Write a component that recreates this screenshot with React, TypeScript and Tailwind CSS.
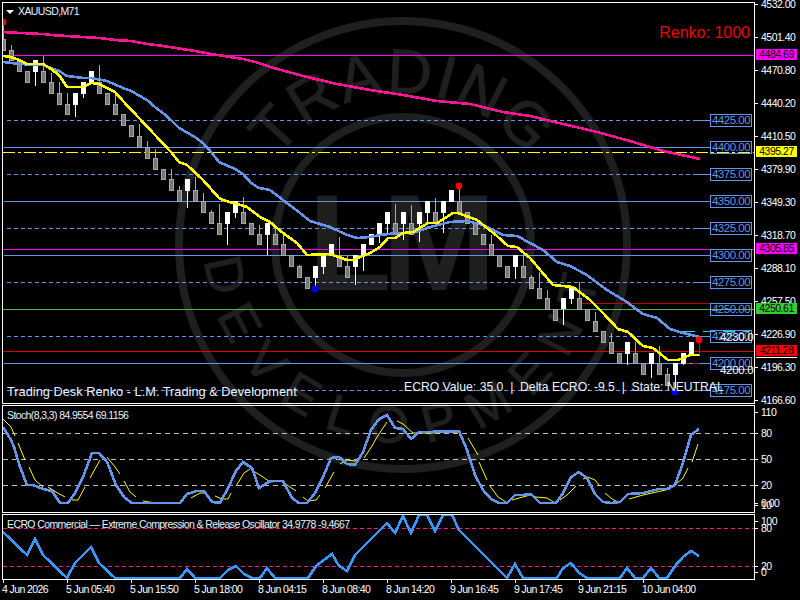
import React from "react";

// [center x, body top, body bottom, wick top, wick bottom, bull]
type Brick = [number, number, number, number, number, number];

const bricks: Brick[] = [
  [3, 39, 51, 25, 51, 0], [11, 50, 61, 45, 61, 0], [19, 61, 72, 61, 72, 0], [27, 71, 83, 71, 83, 0],
  [35, 60, 72, 60, 86, 1], [43, 71, 83, 56, 83, 0], [51, 82, 94, 73, 94, 0], [59, 93, 105, 82, 105, 0],
  [67, 104, 115, 93, 115, 0], [75, 93, 105, 93, 117, 1], [83, 82, 94, 82, 98, 1], [91, 71, 83, 71, 83, 1],
  [99, 82, 94, 65, 94, 0], [107, 93, 105, 93, 105, 0], [115, 104, 115, 95, 115, 0], [123, 114, 126, 114, 126, 0],
  [131, 125, 137, 125, 137, 0], [139, 136, 148, 124, 148, 0], [147, 147, 159, 141, 159, 0], [155, 158, 170, 149, 170, 0],
  [163, 169, 180, 169, 180, 0], [171, 179, 191, 169, 191, 0], [179, 190, 202, 186, 202, 0], [187, 179, 191, 179, 208, 1],
  [195, 190, 202, 177, 202, 0], [203, 201, 213, 193, 213, 0], [211, 212, 224, 210, 224, 0], [219, 223, 235, 204, 235, 0],
  [227, 212, 224, 212, 245, 1], [235, 201, 213, 201, 218, 1], [243, 212, 224, 197, 224, 0], [251, 223, 235, 223, 235, 0],
  [259, 234, 245, 225, 245, 0], [267, 223, 235, 223, 255, 1], [275, 234, 245, 225, 245, 0], [283, 244, 256, 232, 256, 0],
  [291, 255, 267, 255, 267, 0], [299, 266, 278, 265, 278, 0], [307, 277, 289, 277, 289, 0], [315, 266, 278, 266, 289, 1],
  [323, 255, 267, 255, 274, 1], [331, 244, 256, 244, 256, 1], [339, 255, 267, 237, 267, 0], [347, 266, 278, 255, 278, 0],
  [355, 255, 267, 255, 285, 1], [363, 244, 256, 244, 271, 1], [371, 234, 245, 234, 245, 1], [379, 223, 235, 223, 243, 1],
  [387, 212, 224, 212, 235, 1], [395, 223, 235, 204, 235, 0], [403, 212, 224, 212, 240, 1], [411, 223, 235, 205, 235, 0],
  [419, 212, 224, 212, 242, 1], [427, 201, 213, 201, 223, 1], [435, 212, 224, 198, 224, 0], [443, 201, 213, 201, 233, 1],
  [451, 190, 202, 190, 202, 1], [459, 201, 213, 186, 213, 0], [467, 212, 224, 212, 224, 0], [475, 223, 235, 223, 235, 0],
  [483, 234, 245, 234, 245, 0], [491, 244, 256, 235, 256, 0], [499, 255, 267, 255, 267, 0], [507, 266, 278, 266, 278, 0],
  [515, 255, 267, 255, 279, 1], [523, 266, 278, 253, 278, 0], [531, 277, 289, 275, 289, 0], [539, 288, 299, 272, 299, 0],
  [547, 298, 310, 290, 310, 0], [555, 309, 321, 309, 321, 0], [563, 298, 309, 298, 325, 1], [571, 288, 299, 288, 304, 1],
  [579, 298, 310, 282, 310, 0], [587, 309, 321, 309, 321, 0], [595, 321, 332, 312, 332, 0], [603, 331, 343, 331, 343, 0],
  [611, 342, 354, 333, 354, 0], [619, 353, 364, 353, 364, 0], [627, 342, 354, 342, 365, 1], [635, 353, 364, 342, 364, 0],
  [643, 363, 375, 363, 375, 0], [651, 353, 364, 353, 378, 1], [659, 363, 375, 346, 375, 0], [667, 374, 386, 368, 386, 0],
  [675, 363, 375, 363, 392, 1], [683, 353, 364, 353, 365, 1], [691, 342, 354, 342, 354, 1],
];

const pinkMa = "3,32 20,33 43,34 51,35 83,37 99,38 115,40 131,41 147,44 163,46 195,51 211,54 243,59 259,63 270,67 303,76 337,84 370,90 403,95 437,101 470,104 503,112 530,116 563,124 597,132 630,141 663,151 700,159";
const blueMa = "3,62 11,63 19,64 43,65 51,68 59,71 67,76 83,78 91,78 107,81 123,88 131,91 147,100 155,107 163,113 171,120 179,128 195,137 203,143 211,152 219,162 235,169 243,174 251,183 259,188 270,190 283,200 300,213 310,221 330,227 347,235 357,238 370,237 380,235 397,233 413,233 430,227 450,222 467,221 483,225 503,235 517,236 530,243 543,250 557,262 570,266 587,275 607,290 627,302 643,314 657,318 670,329 683,333 700,337";
const yellowMa = "3,56 11,57 19,60 27,64 43,64 51,69 59,75 67,87 83,87 91,83 99,84 115,92 123,101 139,118 155,135 171,152 179,162 187,165 203,180 219,198 223,200 247,207 260,217 270,222 283,233 297,243 307,255 330,254 347,260 353,260 370,253 380,247 388,238 395,238 403,233 413,232 428,223 437,223 453,213 458,213 477,220 497,236 508,246 517,247 530,258 553,285 573,287 590,300 603,313 618,329 628,332 643,346 653,348 668,360 678,360 690,355 700,355";

const stochMain = "3,427 11,440 14,447 20,467 27,485 33,485 43,489 52,491 60,503 68,503 75,493 83,477 92,453 99,453 107,462 116,485 124,497 132,503 180,503 187,494 197,491 204,491 212,502 220,503 228,488 236,471 243,462 252,468 259,488 267,483 270,481 283,481 292,498 299,503 307,503 315,493 323,477 331,458 339,457 347,464 355,465 363,452 371,430 379,419 387,415 395,428 403,429 411,439 419,432 427,432 459,431 467,450 475,475 483,490 491,499 499,503 507,503 515,495 523,495 531,494 540,503 556,503 563,493 571,477 579,472 587,478 595,494 603,502 612,503 620,502 628,494 643,493 659,489 667,489 675,485 683,463 691,435 699,429";
const stochSignal = [
  "3,419 11,427 15,436", "18,443 25,460", "29,467 35,480 43,487", "48,487 56,492 65,497", "72,500 78,500 85,487",
  "90,478 100,460", "107,457 115,467 120,474", "124,481 130,492 136,497", "143,501 155,503 165,503", "167,503 180,503",
  "191,498 200,493 207,493", "215,496 222,499 228,499 231,493", "236,486 244,473 250,469", "255,472 263,477 270,482 281,481 290,487 296,491",
  "303,497 308,501 316,500 320,495", "325,488 334,472", "340,464 347,460 355,461 358,460", "364,458 372,446 377,437 387,422",
  "397,421 403,424 413,433 430,433 460,432", "468,438 478,455", "479,462 487,480", "490,486 498,497 506,502",
  "512,500 530,495 536,497 547,498 555,503", "560,500 567,495 576,486", "583,479 588,477 595,480 600,486", "605,493 612,499 620,503",
  "629,499 643,495 670,489", "675,485 683,478 688,468", "692,462 698,444",
];
const ecroLine = "3,532 27,555 35,539 43,555 67,578 75,563 91,547 99,563 115,578 180,578 187,569 195,578 220,578 228,570 236,566 244,574 252,578 260,578 267,568 270,572 275,578 308,578 316,566 332,554 339,566 347,571 355,555 387,523 395,533 403,516 411,533 419,515 427,515 435,531 443,515 452,515 459,530 507,578 515,564 523,578 557,578 563,568 571,563 579,573 587,578 620,578 627,568 635,578 643,578 651,568 659,578 667,578 675,566 683,557 691,551 699,556";

const levels = [
  { y: 120, label: "4425.00", dashed: true }, { y: 147, label: "4400.00", dashed: false },
  { y: 174, label: "4375.00", dashed: true }, { y: 201, label: "4350.00", dashed: false },
  { y: 228, label: "4325.00", dashed: true }, { y: 255, label: "4300.00", dashed: false },
  { y: 282, label: "4275.00", dashed: true }, { y: 309, label: "4250.00", dashed: false },
  { y: 336, label: "4225.00", dashed: true }, { y: 363, label: "4200.00", dashed: false },
  { y: 390, label: "4175.00", dashed: true },
];

const priceTicks = [
  ["4532.00", 4], ["4501.40", 37], ["4470.80", 70], ["4440.20", 103], ["4410.50", 136], ["4379.90", 169], ["4349.30", 202],
  ["4318.70", 235], ["4288.10", 268], ["4257.50", 301], ["4226.90", 334], ["4196.30", 367], ["4166.60", 400],
] as const;

const priceTags = [
  { label: "4484.69", y: 55, cls: "bg-[#ff00ff] text-black" },
  { label: "4395.27", y: 152, cls: "bg-[#ffff00] text-black" },
  { label: "4305.85", y: 249, cls: "bg-[#ff00ff] text-black" },
  { label: "4250.61", y: 309, cls: "bg-[#32cd32] text-black" },
  { label: "4211.28", y: 351, cls: "bg-[#ff0000] text-black" },
];

const stochTicks = [["110", 412], ["80", 433], ["50", 459], ["20", 485], ["0.00", 503], ["10", 505]] as const;
const ecroTicks = [["100", 521], ["80", 528], ["20", 566], ["0", 572]] as const;
const timeLabels = ["4 Jun 2026", "5 Jun 05:40", "5 Jun 15:50", "5 Jun 18:00", "8 Jun 04:15", "8 Jun 08:40", "8 Jun 14:20", "9 Jun 16:45", "9 Jun 17:45", "9 Jun 21:15", "10 Jun 04:00"];

function Watermark() {
  return (
    <svg className="absolute inset-0" width={800} height={600} fill="none">
      <defs>
        <path id="arc-top" d="M 251 245 A 152 152 0 0 1 555 245" />
        <path id="arc-bottom" d="M 205 245 A 198 198 0 0 0 601 245" />
      </defs>
      <circle cx={403} cy={245} r={224} stroke="#1f1f1f" strokeWidth={8} />
      <circle cx={403} cy={245} r={128} stroke="#1f1f1f" strokeWidth={8} />
      <g fill="#1f1f1f" fontFamily="'Liberation Sans', sans-serif">
        <text fontSize={62} letterSpacing={2} stroke="#1f1f1f">
          <textPath href="#arc-top" startOffset="50%" textAnchor="middle">TRADING</textPath>
        </text>
        <text fontSize={52} letterSpacing={18} stroke="#1f1f1f">
          <textPath href="#arc-bottom" startOffset="50%" textAnchor="middle">DEVELOPMENT</textPath>
        </text>
        <text x={308} y={290} fontSize={137} fontWeight={700}>L</text>
        <text x={382} y={290} fontSize={137} fontWeight={700}>M</text>
      </g>
    </svg>
  );
}

function MainChart() {
  return (
    <svg className="absolute inset-0" width={751} height={400} viewBox="3 3 751 400" fill="none">
      <line x1={3} x2={754} y1={55.5} y2={55.5} stroke="#ff00ff" />
      {levels.map((l) => (
        <g key={l.y}>
          <line x1={l.dashed ? 7 : 4} x2={697} y1={l.y + 0.5} y2={l.y + 0.5} stroke="#6495ed" strokeDasharray={l.dashed ? "4 3" : undefined} />
          <line x1={697} x2={711} y1={l.y + 0.5} y2={l.y + 0.5} stroke="#6495ed" />
        </g>
      ))}
      <line x1={3} x2={754} y1={152.5} y2={152.5} stroke="#ffff00" strokeDasharray="12 3 3 3" />
      <line x1={3} x2={754} y1={249.5} y2={249.5} stroke="#ff00ff" />
      <line x1={3} x2={754} y1={309.5} y2={309.5} stroke="#4cb84c" />
      <line x1={3} x2={754} y1={351.5} y2={351.5} stroke="#e00000" />
      <line x1={579} x2={710} y1={303.5} y2={303.5} stroke="#c00000" />
      <line x1={683} x2={750} y1={331.5} y2={331.5} stroke="#00e0e0" strokeDasharray="12 8" />
      <line x1={683} x2={700} y1={363.5} y2={363.5} stroke="#e00000" strokeDasharray="6 4" />
      {bricks.map(([x, top, bottom, wTop, wBottom, bull]) => (
        <g key={x} shapeRendering="crispEdges">
          <line x1={x + 0.5} x2={x + 0.5} y1={wTop} y2={wBottom} stroke={bull ? "#ffffff" : "#a8a8a8"} />
          <rect x={x - 1.5} y={top + 0.5} width={4} height={bottom - top - 1} fill={bull ? "#ffffff" : "#787878"} stroke={bull ? "#ffffff" : "#a8a8a8"} />
        </g>
      ))}
      <polyline points={pinkMa} stroke="#ff1493" strokeWidth={2.6} shapeRendering="crispEdges" />
      <polyline points={blueMa} stroke="#6495ed" strokeWidth={2.6} shapeRendering="crispEdges" />
      <polyline points={yellowMa} stroke="#ffff00" strokeWidth={2.6} shapeRendering="crispEdges" />
      <line x1={699.5} x2={699.5} y1={340} y2={355} stroke="#ff0000" />
      <circle cx={3} cy={22} r={3.4} fill="#ff0000" />
      <circle cx={459} cy={186} r={3.4} fill="#ff0000" />
      <circle cx={699} cy={340} r={3.4} fill="#ff0000" />
      <circle cx={315} cy={289} r={3.4} fill="#0000ff" />
      <circle cx={675} cy={392} r={3.4} fill="#0000ff" />
    </svg>
  );
}

function StochChart() {
  return (
    <svg className="absolute inset-0" width={751} height={106} viewBox="3 406 751 106" fill="none">
      {[433, 459, 485].map((y) => (
        <line key={y} x1={3} x2={754} y1={y + 0.5} y2={y + 0.5} stroke="#c0c0c0" strokeDasharray="5 4" />
      ))}
      {stochSignal.map((p) => (
        <polyline key={p} points={p} stroke="#ffff00" />
      ))}
      <polyline points={stochMain} stroke="#6495ed" strokeWidth={2.6} shapeRendering="crispEdges" />
    </svg>
  );
}

function EcroChart() {
  return (
    <svg className="absolute inset-0" width={751} height={64} viewBox="3 515 751 64" fill="none">
      {[528, 566].map((y) => (
        <line key={y} x1={3} x2={754} y1={y + 0.5} y2={y + 0.5} stroke="#ff1493" strokeDasharray="4 3" />
      ))}
      <polyline points={ecroLine} stroke="#3399ff" strokeWidth={2.6} shapeRendering="crispEdges" />
    </svg>
  );
}

function AxisLabel({ text, y, top }: { text: string; y: number; top: number }) {
  return (
    <div className="absolute left-0 flex items-center" style={{ top: y - top - 6 }}>
      <div className="w-[3px] h-px bg-white" />
      <span className="ml-[3px] h-3 leading-3 text-white">{text}</span>
    </div>
  );
}

export default function App() {
  return (
    <div className="relative w-[800px] h-[600px] bg-black overflow-hidden font-['Liberation_Sans',sans-serif] text-[10.5px]">
      <Watermark />
      <div className="relative flex flex-col gap-px pt-[2px] pl-[2px]">
        {/* Price pane */}
        <div className="flex h-[402px]">
          <div className="relative w-[753px] border border-white">
            <MainChart />
            <div className="absolute left-[3px] top-[1px] flex items-center gap-[4px] text-white">
              <div className="w-0 h-0 border-x-[4px] border-t-[4px] border-x-transparent border-t-white" />
              <span className="text-[#e8f4ff] tracking-[-0.6px]">XAUUSD,M71</span>
            </div>
            <span className="absolute right-[4px] top-[20px] text-[16px] leading-5 text-[#f00000]">Renko: 1000</span>
            {levels.map((l) => (
              <div key={l.y} className="absolute left-[707px] w-[42px] h-[13px] border border-[#6495ed] flex items-center justify-center leading-none text-[11.5px] tracking-[-0.5px] text-[#6495ed]" style={{ top: l.y - 9 }}>
                {l.label}
              </div>
            ))}
            <span className="absolute left-[717px] top-[328px] text-[11.5px] leading-3 tracking-[-0.3px] text-white">4230.0</span>
            <span className="absolute left-[717px] top-[361px] text-[11.5px] leading-3 tracking-[-0.3px] text-white">4200.0</span>
            <span className="absolute left-[4px] top-[381px] text-[12.8px] leading-4 text-[#e8f4ff] whitespace-nowrap">Trading Desk Renko - L.M. Trading &amp; Development</span>
            <span className="absolute left-[401px] top-[376px] text-[12.2px] leading-4 text-[#e8f4ff] whitespace-pre">ECRO Value: 35.0  |  Delta ECRO: -9.5  |  State: NEUTRAL</span>
          </div>
          <div className="relative flex-1 tracking-[-0.5px]">
            {priceTicks.map(([t, y]) => (
              <AxisLabel key={t} text={t} y={y} top={2} />
            ))}
            {priceTags.map((p) => (
              <div key={p.label} className={`absolute left-[1px] w-[41px] h-[11px] leading-[11px] text-center ${p.cls}`} style={{ top: p.y - 8 }}>
                {p.label}
              </div>
            ))}
            <div className="absolute left-[1px] top-[355px] w-[41px] h-px bg-white" />
          </div>
        </div>

        {/* Stochastic pane */}
        <div className="flex h-[108px]">
          <div className="relative w-[753px] border border-white">
            <StochChart />
            <span className="absolute left-[4px] top-[3px] leading-3 tracking-[-0.6px] text-[#e8f4ff] whitespace-nowrap">Stoch(8,3,3) 84.9554 69.1156</span>
          </div>
          <div className="relative flex-1 tracking-[-0.5px]">
            {stochTicks.map(([t, y]) => (
              <AxisLabel key={t} text={t} y={y} top={405} />
            ))}
          </div>
        </div>

        {/* ECRO pane */}
        <div className="flex h-[66px]">
          <div className="relative w-[753px] border border-white">
            <EcroChart />
            <span className="absolute left-[4px] top-[3px] leading-3 tracking-[-0.6px] text-[#e8f4ff] whitespace-nowrap">ECRO Commercial — Extreme Compression &amp; Release Oscillator 34.9778 -9.4667</span>
          </div>
          <div className="relative flex-1 tracking-[-0.5px]">
            {ecroTicks.map(([t, y]) => (
              <AxisLabel key={t} text={t} y={y} top={514} />
            ))}
          </div>
        </div>

        {/* Time axis */}
        <div className="flex -mt-px text-white tracking-[-0.6px]">
          {timeLabels.map((t) => (
            <div key={t} className="w-[64px] shrink-0 flex flex-col">
              <div className="ml-px w-px h-[3px] bg-white" />
              <span className="leading-3 whitespace-nowrap">{t}</span>
            </div>
          ))}
        </div>
      </div>
    </div>
  );
}
